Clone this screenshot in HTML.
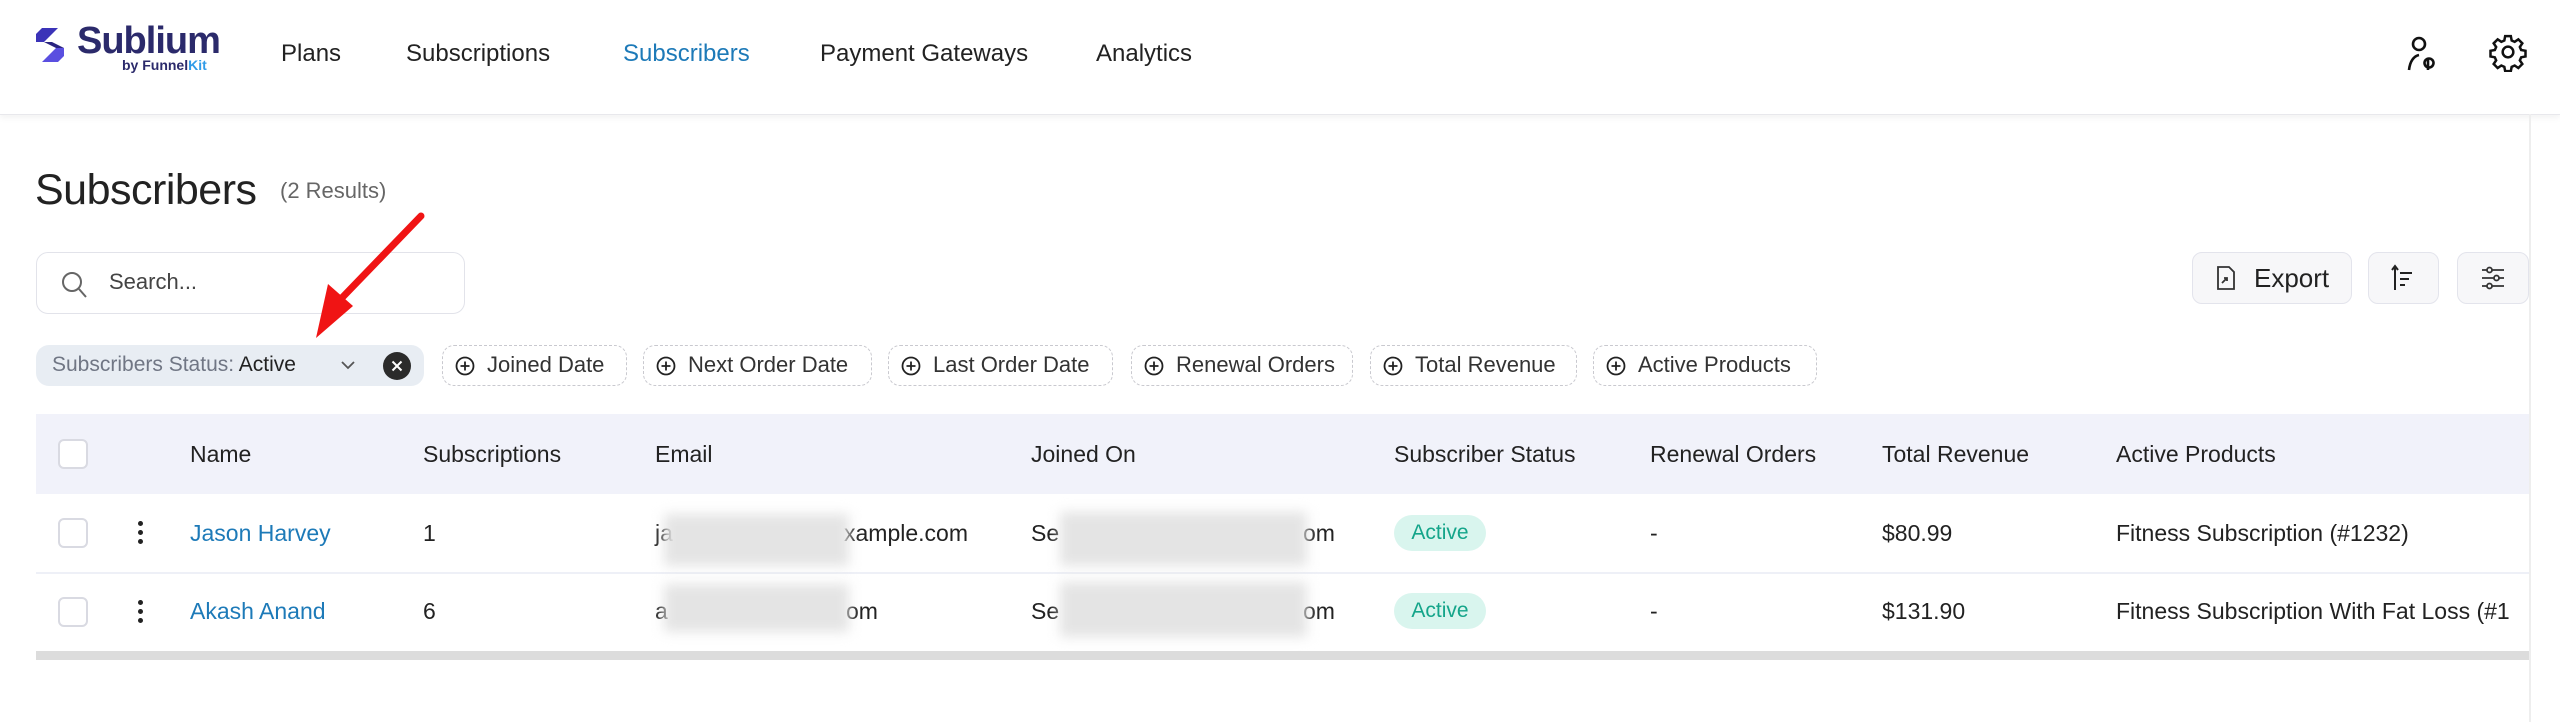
<!DOCTYPE html>
<html><head><meta charset="utf-8">
<style>
*{box-sizing:border-box;margin:0;padding:0}
body{width:2560px;height:722px;background:#fff;font-family:"Liberation Sans",sans-serif;color:#222;position:relative;overflow:hidden}
.a{position:absolute;white-space:nowrap}
.hdr{position:absolute;left:0;top:0;width:2560px;height:115px;background:#fff;border-bottom:1px solid #e8e8ec;box-shadow:0 3px 6px rgba(0,0,0,.05)}
.nav{font-size:24px;top:40px;color:#222}
.chip{position:absolute;top:345px;height:41px;border:1.5px dashed #c9c9cf;border-radius:12px;font-size:22px;color:#333;line-height:38px;padding-left:44px}
.chip svg{position:absolute;left:12px;top:10px}
.btn{position:absolute;top:252px;height:52px;border:1px solid #e3e4ec;border-radius:10px;background:#f7f7f9}
.th{position:absolute;top:441px;font-size:23px;color:#222}
.td{position:absolute;font-size:23px;color:#222}
.blur{position:absolute;background:#e4e4e4;filter:blur(6px)}
.cb{position:absolute;left:58px;width:30px;height:30px;border:2px solid #d9dae2;border-radius:6px;background:#fff}
.keb{position:absolute;left:138px;width:5px}
.keb i{display:block;width:5px;height:5px;border-radius:50%;background:#222;margin-bottom:4px}
.badge{position:absolute;left:1394px;width:92px;height:36px;border-radius:18px;background:#d9f5ee;color:#14a58a;font-size:21px;text-align:center;line-height:36px}
</style></head><body>
<div class="hdr"></div>
<svg class="a" style="left:34px;top:26px" width="32" height="38" viewBox="0 0 32 38"><path d="M8 2 L24 2 L10 16 L2 16 L2 8 Z" fill="#3b33b8"/><path d="M24 36 L8 36 L22 22 L30 22 L30 30 Z" fill="#5a4fe0"/><path d="M10 16 L22 22 L30 22 L18 16 Z" fill="#2a2480"/></svg>
<div class="a" style="left:77px;top:20px;font-size:38px;font-weight:bold;color:#2b2a6b;letter-spacing:-1px">Sublium</div>
<div class="a" style="left:122px;top:57px;font-size:14px;font-weight:bold;color:#2b2a6b">by Funnel<span style="color:#2f9be8">Kit</span></div>
<div class="a nav" style="left:281px">Plans</div>
<div class="a nav" style="left:406px">Subscriptions</div>
<div class="a nav" style="left:623px;color:#1d7ab8">Subscribers</div>
<div class="a nav" style="left:820px">Payment Gateways</div>
<div class="a nav" style="left:1096px">Analytics</div>
<svg class="a" style="left:2402px;top:34px" width="40" height="40" viewBox="0 0 40 40" fill="none" stroke="#111" stroke-width="2.6"><circle cx="17" cy="10" r="6"/><path d="M7 36 C8 27 12 22 17 21"/><path d="M26 24 L26 36"/><circle cx="27" cy="29" r="4.5"/></svg>
<svg class="a" style="left:2488px;top:32px" width="40" height="40" viewBox="0 0 24 24" fill="none" stroke="#111" stroke-width="1.5"><path d="M10.3 2.5h3.4l.5 2.6 1.8.8 2.2-1.5 2.4 2.4-1.5 2.2.8 1.8 2.6.5v3.4l-2.6.5-.8 1.8 1.5 2.2-2.4 2.4-2.2-1.5-1.8.8-.5 2.6h-3.4l-.5-2.6-1.8-.8-2.2 1.5-2.4-2.4 1.5-2.2-.8-1.8-2.6-.5v-3.4l2.6-.5.8-1.8-1.5-2.2 2.4-2.4 2.2 1.5 1.8-.8z"/><circle cx="12" cy="12" r="3.2"/></svg>

<div class="a" style="left:35px;top:166px;font-size:43px;color:#222;letter-spacing:-0.5px">Subscribers</div>
<div class="a" style="left:280px;top:178px;font-size:22px;color:#666">(2 Results)</div>

<div class="a" style="left:36px;top:252px;width:429px;height:62px;border:1.5px solid #e2e3ea;border-radius:12px"></div>
<svg class="a" style="left:60px;top:270px" width="30" height="30" viewBox="0 0 30 30" fill="none" stroke="#666" stroke-width="2"><circle cx="12" cy="12" r="9"/><path d="M19 19 L26 27"/></svg>
<div class="a" style="left:109px;top:269px;font-size:22px;color:#444">Search...</div>

<div class="a" style="left:36px;top:345px;width:388px;height:41px;background:#e8edf3;border-radius:13px"></div>
<div class="a" style="left:52px;top:353px;font-size:21px;color:#707684">Subscribers Status: <span style="color:#222">Active</span></div>
<svg class="a" style="left:340px;top:358px" width="16" height="14" viewBox="0 0 16 14" fill="none" stroke="#555" stroke-width="1.8"><path d="M2 4 L8 10 L14 4"/></svg>
<svg class="a" style="left:383px;top:352px" width="28" height="28" viewBox="0 0 28 28"><circle cx="14" cy="14" r="14" fill="#2b2b2b"/><path d="M9.5 9.5 L18.5 18.5 M18.5 9.5 L9.5 18.5" stroke="#fff" stroke-width="2"/></svg>

<div class="chip" style="left:442px;width:185px"><svg width="20" height="20" viewBox="0 0 20 20" fill="none" stroke="#222" stroke-width="1.8"><circle cx="10" cy="10" r="8.5"/><path d="M10 5.5 V14.5 M5.5 10 H14.5"/></svg>Joined Date</div>
<div class="chip" style="left:643px;width:229px"><svg width="20" height="20" viewBox="0 0 20 20" fill="none" stroke="#222" stroke-width="1.8"><circle cx="10" cy="10" r="8.5"/><path d="M10 5.5 V14.5 M5.5 10 H14.5"/></svg>Next Order Date</div>
<div class="chip" style="left:888px;width:225px"><svg width="20" height="20" viewBox="0 0 20 20" fill="none" stroke="#222" stroke-width="1.8"><circle cx="10" cy="10" r="8.5"/><path d="M10 5.5 V14.5 M5.5 10 H14.5"/></svg>Last Order Date</div>
<div class="chip" style="left:1131px;width:222px"><svg width="20" height="20" viewBox="0 0 20 20" fill="none" stroke="#222" stroke-width="1.8"><circle cx="10" cy="10" r="8.5"/><path d="M10 5.5 V14.5 M5.5 10 H14.5"/></svg>Renewal Orders</div>
<div class="chip" style="left:1370px;width:207px"><svg width="20" height="20" viewBox="0 0 20 20" fill="none" stroke="#222" stroke-width="1.8"><circle cx="10" cy="10" r="8.5"/><path d="M10 5.5 V14.5 M5.5 10 H14.5"/></svg>Total Revenue</div>
<div class="chip" style="left:1593px;width:224px"><svg width="20" height="20" viewBox="0 0 20 20" fill="none" stroke="#222" stroke-width="1.8"><circle cx="10" cy="10" r="8.5"/><path d="M10 5.5 V14.5 M5.5 10 H14.5"/></svg>Active Products</div>

<div class="btn" style="left:2192px;width:160px"></div>
<svg class="a" style="left:2214px;top:264px" width="24" height="28" viewBox="0 0 24 28" fill="none" stroke="#333" stroke-width="1.8"><path d="M4 3 H15 L20 8 V25 H4 Z"/><path d="M8 19 L13 14 M10 14 H13 V17"/></svg>
<div class="a" style="left:2254px;top:263px;font-size:26px;color:#222">Export</div>
<div class="btn" style="left:2368px;width:71px"></div>
<svg class="a" style="left:2390px;top:264px" width="28" height="28" viewBox="0 0 28 28" fill="none" stroke="#222" stroke-width="2"><path d="M5 26 V3 M2 6 L5 2 L8 6"/><path d="M10 9 H22 M10 15 H19 M10 21 H15"/></svg>
<div class="btn" style="left:2457px;width:72px"></div>
<svg class="a" style="left:2479px;top:264px" width="28" height="28" viewBox="0 0 28 28" fill="none" stroke="#333" stroke-width="1.8"><path d="M3 6 H8 M13 6 H25 M3 14 H15 M20 14 H25 M3 22 H8 M13 22 H25"/><circle cx="10.5" cy="6" r="2.5"/><circle cx="17.5" cy="14" r="2.5"/><circle cx="10.5" cy="22" r="2.5"/></svg>

<svg class="a" style="left:0;top:0" width="500" height="400"><path d="M421 216 L336 304" stroke="#f01414" stroke-width="7" stroke-linecap="round"/><path d="M316 338 L328 284 L353 306 Z" fill="#f01414"/></svg>

<div class="a" style="left:36px;top:414px;width:2493px;height:80px;background:#f1f2fa"></div>
<div class="a" style="left:36px;top:572px;width:2493px;height:2px;background:#eef0f7"></div>
<div class="a" style="left:36px;top:651px;width:2493px;height:9px;background:#dcdcdc"></div>
<div class="cb" style="top:439px"></div>
<div class="th" style="left:190px">Name</div>
<div class="th" style="left:423px">Subscriptions</div>
<div class="th" style="left:655px">Email</div>
<div class="th" style="left:1031px">Joined On</div>
<div class="th" style="left:1394px">Subscriber Status</div>
<div class="th" style="left:1650px">Renewal Orders</div>
<div class="th" style="left:1882px">Total Revenue</div>
<div class="th" style="left:2116px">Active Products</div>

<div class="cb" style="top:518px"></div>
<div class="keb" style="top:521px"><i></i><i></i><i></i></div>
<div class="td" style="left:190px;top:520px;color:#1d7ab8">Jason Harvey</div>
<div class="td" style="left:423px;top:520px">1</div>
<div class="td" style="left:655px;top:520px">ja</div>
<div class="td" style="left:844px;top:520px">xample.com</div>
<div class="td" style="left:1031px;top:520px">Se</div>
<div class="td" style="left:1303px;top:520px">om</div>
<div class="blur" style="left:664px;top:514px;width:185px;height:52px"></div>
<div class="blur" style="left:1060px;top:512px;width:247px;height:54px"></div>
<div class="badge" style="top:515px">Active</div>
<div class="td" style="left:1650px;top:520px">-</div>
<div class="td" style="left:1882px;top:520px">$80.99</div>
<div class="td" style="left:2116px;top:520px">Fitness Subscription (#1232)</div>

<div class="cb" style="top:597px"></div>
<div class="keb" style="top:600px"><i></i><i></i><i></i></div>
<div class="td" style="left:190px;top:598px;color:#1d7ab8">Akash Anand</div>
<div class="td" style="left:423px;top:598px">6</div>
<div class="td" style="left:655px;top:598px">a</div>
<div class="td" style="left:846px;top:598px">om</div>
<div class="td" style="left:1031px;top:598px">Se</div>
<div class="td" style="left:1303px;top:598px">om</div>
<div class="blur" style="left:664px;top:584px;width:185px;height:48px"></div>
<div class="blur" style="left:1060px;top:582px;width:247px;height:55px"></div>
<div class="badge" style="top:593px">Active</div>
<div class="td" style="left:1650px;top:598px">-</div>
<div class="td" style="left:1882px;top:598px">$131.90</div>
<div class="td" style="left:2116px;top:598px;width:413px;overflow:hidden">Fitness Subscription With Fat Loss (#1</div>
<div class="a" style="left:2529px;top:114px;width:2px;height:608px;background:#eee"></div>
</body></html>
